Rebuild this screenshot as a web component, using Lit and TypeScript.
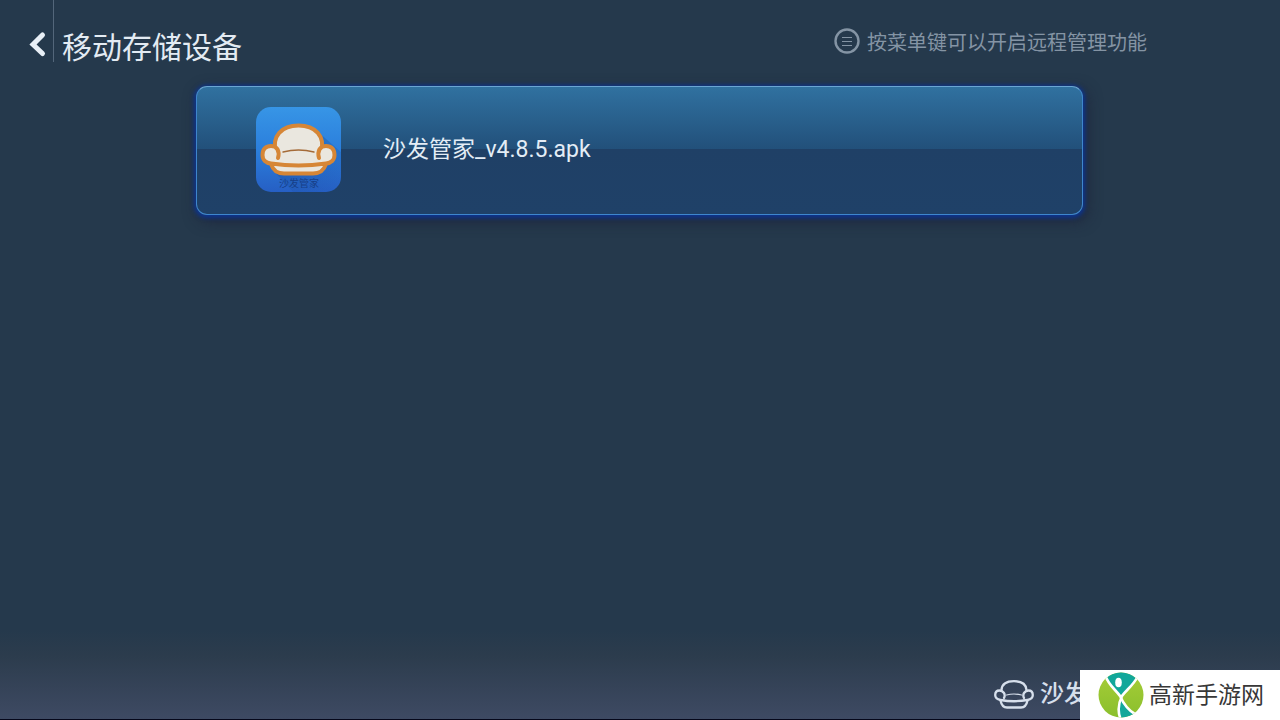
import { LitElement, html, css, svg } from "lit";
import { customElement, property } from "lit/decorators.js";

const sofaOutline = svg`
  <path d="M7.5 10 C8 4 13 1.2 20 1.2 C27 1.2 32 4 32.500 10" />
  <path d="M10 18 C12 14 9 10.500 5.500 10.500 C2.500 10.500 1.200 12.500 1.200 15 C1.200 18 3.500 19.500 6.500 20 Q20 22.500 33.500 20 C36.500 19.500 38.800 18 38.800 15 C38.800 12.500 37.500 10.500 34.500 10.500 C31 10.500 28 14 30 18" />
  <path d="M6.500 20.500 C7.500 25.500 9.500 27.500 13 27.500 H27 C30.500 27.500 32.500 25.500 33.500 20.500" />
  <path d="M12.500 15 Q20 13 27.500 15" stroke-width="1.2" />
`;

@customElement("file-card")
export class FileCard extends LitElement {
  @property() name = "";
  @property() label = "";

  static styles = css`
    :host {
      display: block;
    }
    .card {
      box-sizing: border-box;
      width: 100%;
      display: flex;
      align-items: center;
      gap: 42px;
      padding: 20px 59px 22px;
      margin: 0;
      border: 1px solid #3f86cc;
      border-top-color: #6aa5d2;
      border-radius: 11px;
      background: linear-gradient(#3071a0 0, #22507a 49%, #1f4066 49%, #1f4168 100%);
      box-shadow: 0 1px 4px 2px #0c3591, 3px 5px 14px 2px rgba(28, 32, 56, 0.65);
      color: #e3edf6;
      font: 23px/32px Roboto, "Noto Sans CJK SC", sans-serif;
      text-align: left;
      cursor: pointer;
    }
    .icon {
      display: block;
      width: 85px;
      height: 85px;
      flex: none;
    }
    .label {
      font: 10px "Noto Sans CJK SC", sans-serif;
      fill: #173f88;
    }
  `;

  render() {
    return html`
      <button class="card">
        <svg class="icon" viewBox="0 0 85 85" aria-hidden="true">
          <defs>
            <linearGradient id="tile" x1="0" y1="0" x2="0" y2="1">
              <stop offset="0" stop-color="#3795e6" />
              <stop offset="0.5" stop-color="#2b7fdc" />
              <stop offset="1" stop-color="#265fc4" />
            </linearGradient>
            <linearGradient id="shade" x1="0" y1="0" x2="1" y2="1">
              <stop offset="0" stop-color="#174c9a" />
              <stop offset="1" stop-color="#174c9a" stop-opacity="0" />
            </linearGradient>
          </defs>
          <rect width="85" height="85" rx="15" fill="url(#tile)" />
          <path d="M61 24 L85 45 V70 Q85 85 70 85 H37 L16 62 Z" fill="url(#shade)" opacity="0.6" />
          <g fill="#eae7df" stroke="#d68636" stroke-width="4" stroke-linejoin="round" stroke-linecap="round">
            <path d="M15 57 Q18 66.500 28 66.500 H57 Q67 66.500 70 57 Z" />
            <path d="M20 46 C15 29 26 18.500 42.500 18.500 C59 18.500 70 29 65 46 V54 H20 Z" />
            <path d="M6.500 48 C6.500 42 10 39 15 39 C21 39 24 44 22.500 52 V46 H62.500 V52 C61 44 64 39 70 39 C75 39 78.500 42 78.500 48 C78.500 53 75 56 70 56.500 C52 59 33 59 15 56.500 C10 56 6.500 53 6.500 48 Z" stroke="none" />
            <path d="M22 51 C24 44 21 39 15 39 C10 39 6.500 42 6.500 48 C6.500 53 10 56 15 56.500 C33 59 52 59 70 56.500 C75 56 78.500 53 78.500 48 C78.500 42 75 39 70 39 C64 39 61 44 63 51" fill="none" />
            <path d="M27 45 Q42.500 41 58 45" fill="none" stroke="#a56b38" stroke-width="1.3" />
          </g>
          <text class="label" x="43" y="80" text-anchor="middle">${this.label}</text>
        </svg>
        <span>${this.name}</span>
      </button>
    `;
  }
}

@customElement("app-root")
export class AppRoot extends LitElement {
  static styles = css`
    :host {
      display: block;
      font-family: Roboto, "Noto Sans CJK SC", sans-serif;
      color: #e3ebf3;
    }
    .page {
      min-height: 100vh;
      display: flex;
      flex-direction: column;
      position: relative;
      background: linear-gradient(transparent calc(100% - 90px), #2c3c4d calc(100% - 64px), #3e4a63 calc(100% - 1px), #05071a calc(100% - 1px)) #25394c;
    }
    .header {
      display: flex;
      align-items: flex-start;
      justify-content: space-between;
      padding-right: 133px;
    }
    .heading {
      display: flex;
      align-items: flex-start;
    }
    .back {
      display: flex;
      justify-content: flex-end;
      box-sizing: border-box;
      width: 54px;
      height: 62px;
      padding: 31px 6px 0 0;
      margin: 0;
      border: 0;
      border-right: 1px solid #53667a;
      background: none;
      cursor: pointer;
    }
    .back svg {
      width: 18px;
      height: 27px;
    }
    h1 {
      margin: 32px 0 0 8px;
      font-size: 30px;
      line-height: 32px;
      height: 30px;
      font-weight: 400;
    }
    .hint {
      display: flex;
      align-items: center;
      gap: 7px;
      margin: 28px 0 0;
      font-size: 20px;
      color: #8494a4;
    }
    .hint svg {
      width: 26px;
      height: 26px;
    }
    .hint span {
      line-height: 26px;
      padding-top: 2px;
      margin-bottom: -2px;
    }
    .files {
      flex: 1;
      list-style: none;
      margin: 0;
      padding: 24px 197px 0 196px;
    }
    .brand {
      display: flex;
      align-items: center;
      justify-content: flex-end;
      gap: 6px;
      padding: 0 144px 9px 0;
      font-size: 24px;
      font-weight: 500;
      line-height: 34px;
      color: #d6dfeb;
    }
    .brand svg {
      width: 40px;
      height: 29px;
    }
    .site {
      position: absolute;
      right: 0;
      bottom: 0;
      box-sizing: border-box;
      width: 200px;
      height: 50px;
      display: flex;
      align-items: center;
      gap: 5px;
      padding-left: 18px;
      background: #fff;
      color: #383838;
      font-size: 23px;
      line-height: 30px;
      white-space: nowrap;
    }
    .site svg {
      width: 46px;
      height: 46px;
    }
    .site span {
      padding-top: 2px;
    }
  `;

  private files = [{ name: "沙发管家_v4.8.5.apk", label: "沙发管家" }];

  render() {
    return html`
      <div class="page">
        <header class="header">
          <div class="heading">
            <button class="back" aria-label="返回">
              <svg viewBox="0 0 18 27" fill="none" stroke="#e8eff6" stroke-width="5" stroke-linecap="round" stroke-linejoin="miter">
                <path d="M13.500 4 L4 13.500 L13.500 22.500" />
              </svg>
            </button>
            <h1>移动存储设备</h1>
          </div>
          <p class="hint">
            <svg viewBox="0 0 26 26" fill="none" stroke="currentColor" aria-hidden="true">
              <circle cx="13" cy="13" r="11.500" stroke-width="2.4" />
              <path d="M8 9.500 H18 M8 13.500 H18 M8 17.500 H18" stroke-width="1.2" />
            </svg>
            <span>按菜单键可以开启远程管理功能</span>
          </p>
        </header>
        <ul class="files">
          ${this.files.map((f) => html`<li><file-card .name=${f.name} .label=${f.label}></file-card></li>`)}
        </ul>
        <footer class="brand">
          <svg viewBox="0 0 40 29" fill="none" stroke="currentColor" stroke-width="2.3" stroke-linecap="round" aria-hidden="true">
            ${sofaOutline}
          </svg>
          <span>沙发管家</span>
        </footer>
        <aside class="site">
          <svg viewBox="0 0 46 46" aria-hidden="true">
            <defs>
              <clipPath id="disc"><circle cx="23" cy="23" r="22.500" /></clipPath>
              <linearGradient id="leaf" x1="0" y1="0" x2="0" y2="1">
                <stop offset="0" stop-color="#a6cd38" />
                <stop offset="1" stop-color="#8abf2c" />
              </linearGradient>
            </defs>
            <g clip-path="url(#disc)">
              <rect width="46" height="46" fill="url(#leaf)" />
              <path d="M8 0 C10 12 16 18 23 23 C31 18 36 12 40 0 Z" fill="#12a79a" />
              <path d="M24 27 C20 35 20 41 24 47 H32 L36 42 C31 38 27 33 24 27 Z" fill="#12a79a" />
              <path d="M7 3 C11 14 18 18 22 24 C26 33 30 38 37 42" fill="none" stroke="#fff" stroke-width="2.6" />
              <path d="M40 4 C35 14 28 18 24 24 C20 32 19 39 23 48" fill="none" stroke="#fff" stroke-width="2.6" />
              <ellipse cx="20.500" cy="10.500" rx="3.3" ry="4.7" fill="#fff" />
            </g>
          </svg>
          <span>高新手游网</span>
        </aside>
      </div>
    `;
  }
}
